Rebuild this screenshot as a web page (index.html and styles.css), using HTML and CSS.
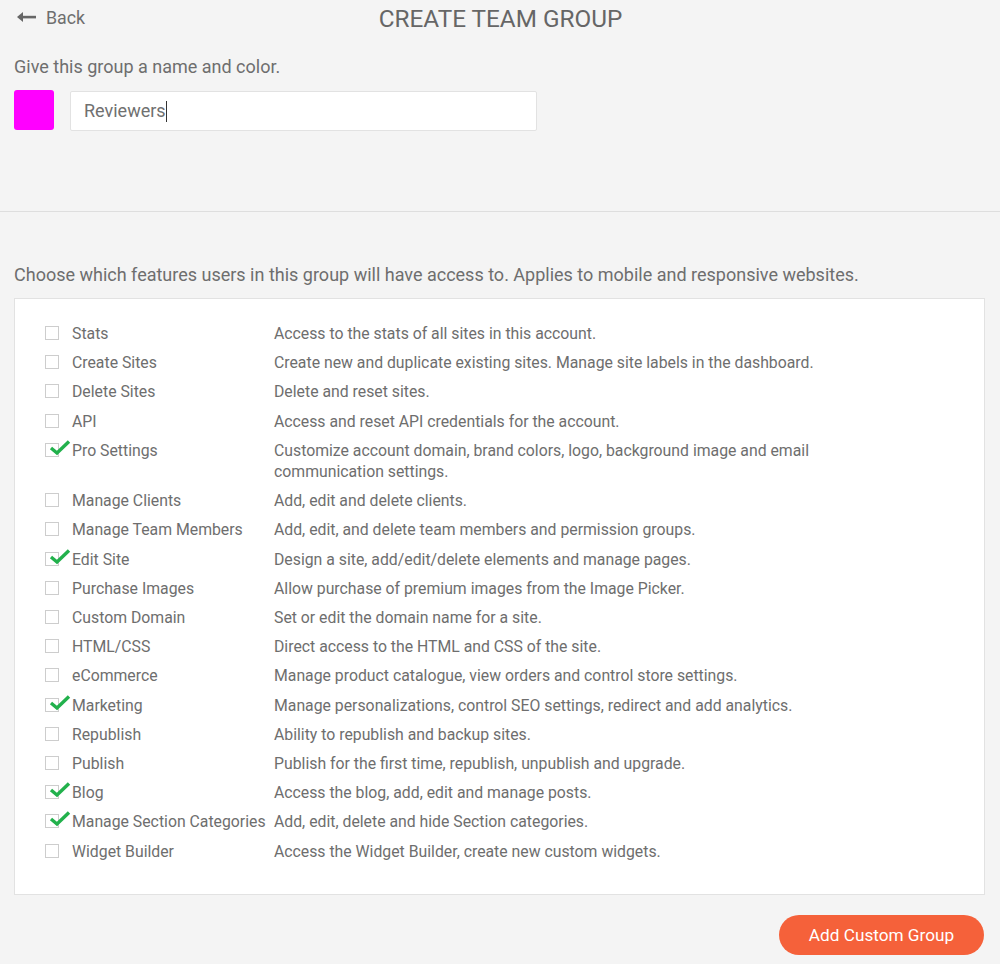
FILE: index.html
```html
<!DOCTYPE html>
<html lang="en">
  <head>
    <meta charset="UTF-8" />
    <title>Create Team Group</title>
    <meta name="viewport" content="width=device-width, initial-scale=1.0" />
    <link rel="stylesheet" href="styles.css">
  </head>
  <body>
    <header class="top">
      <a class="back" href="#">
        <svg width="20" height="12" viewBox="0 0 20 12">
          <path d="M7 1 L1 6 L7 11 Z" fill="#666" />
          <rect x="5" y="4.8" width="15" height="2.6" fill="#666" />
        </svg>
        Back
      </a>
      <h1>CREATE TEAM GROUP</h1>
      <span></span>
    </header>

    <section class="name-section">
      <p class="lead">Give this group a name and color.</p>
      <div class="name-row">
        <div class="swatch"></div>
        <div class="name-field">Reviewers<span class="caret"></span></div>
      </div>
    </section>

    <hr class="divider" />

    <section class="features">
      <p class="lead">Choose which features users in this group will have access to. Applies to mobile and responsive websites.</p>
      <div class="feature-box">
        <div class="feature-list" id="featureList"></div>
      </div>
      <div class="actions">
        <button type="button">Add Custom Group</button>
      </div>
    </section>

    <script>
      const features = [
        ["Stats", "Access to the stats of all sites in this account.", false],
        ["Create Sites", "Create new and duplicate existing sites. Manage site labels in the dashboard.", false],
        ["Delete Sites", "Delete and reset sites.", false],
        ["API", "Access and reset API credentials for the account.", false],
        ["Pro Settings", "Customize account domain, brand colors, logo, background image and email communication settings.", true],
        ["Manage Clients", "Add, edit and delete clients.", false],
        ["Manage Team Members", "Add, edit, and delete team members and permission groups.", false],
        ["Edit Site", "Design a site, add/edit/delete elements and manage pages.", true],
        ["Purchase Images", "Allow purchase of premium images from the Image Picker.", false],
        ["Custom Domain", "Set or edit the domain name for a site.", false],
        ["HTML/CSS", "Direct access to the HTML and CSS of the site.", false],
        ["eCommerce", "Manage product catalogue, view orders and control store settings.", false],
        ["Marketing", "Manage personalizations, control SEO settings, redirect and add analytics.", true],
        ["Republish", "Ability to republish and backup sites.", false],
        ["Publish", "Publish for the first time, republish, unpublish and upgrade.", false],
        ["Blog", "Access the blog, add, edit and manage posts.", true],
        ["Manage Section Categories", "Add, edit, delete and hide Section categories.", true],
        ["Widget Builder", "Access the Widget Builder, create new custom widgets.", false],
      ];

      const list = document.getElementById("featureList");
      const tick =
        '<svg class="tick" width="24" height="16" viewBox="0 0 24 16">' +
        '<path d="M4 8 L10 13 L22 1.5" fill="none" stroke="#22b14c" stroke-width="3.4" />' +
        "</svg>";

      features.forEach(function (f) {
        const row = document.createElement("div");
        row.className = "feature-row";
        row.innerHTML =
          '<span class="box">' + (f[2] ? tick : "") + "</span>" +
          '<span class="name">' + f[0] + "</span>" +
          '<span class="desc">' + f[1] + "</span>";
        list.appendChild(row);
      });
    </script>
  </body>
</html>
```

FILE: styles.css
```css
body {
  margin: 0;
  background: #f4f4f4;
  color: #6e6e6e;
  font-family: Roboto, "Liberation Sans", sans-serif;
}

.top {
  display: grid;
  grid-template-columns: 1fr auto 1fr;
  align-items: center;
  height: 38px;
  padding: 0 15px 0 16px;
}

.back {
  display: flex;
  align-items: center;
  gap: 10px;
  color: #6e6e6e;
  font-size: 17.8px;
  text-decoration: none;
  margin-bottom: 4px;
}

.top h1 {
  margin: 0;
  font-size: 24.3px;
  font-weight: 400;
  color: #666;
  line-height: 30px;
}

.name-section,
.features {
  padding: 0 15px 0 14px;
}

.lead {
  margin: 0;
  font-size: 18px;
  line-height: 24px;
}

.name-section .lead {
  padding-top: 17px;
}

.name-row {
  display: flex;
  gap: 16px;
  margin-top: 11px;
}

.swatch {
  width: 40px;
  height: 40px;
  border-radius: 3px;
  background: #ff00ff;
}

.name-field {
  width: 452px;
  height: 38px;
  margin-top: 1px;
  padding-left: 13px;
  background: white;
  border: 1px solid #e2e2e2;
  border-radius: 2px;
  font-size: 18px;
  line-height: 38px;
  color: #707070;
}

.caret {
  display: inline-block;
  width: 1px;
  height: 21px;
  background: #333;
  vertical-align: -5px;
}

.divider {
  margin: 80px 0 0;
  border: 0;
  border-top: 1px solid #dedede;
}

.features .lead {
  margin-top: 51px;
}

.feature-box {
  margin-top: 11px;
  background: white;
  border: 1px solid #e2e2e2;
  padding: 20px 30px 28px;
}

.feature-row {
  display: grid;
  grid-template-columns: 27px 202px 590px;
  align-items: start;
  padding: 4px 0;
  font-size: 15.8px;
  line-height: 21.2px;
}

.box {
  position: relative;
  width: 14px;
  height: 14px;
  margin-top: 3px;
  box-sizing: border-box;
  border: 1px solid #cdcdcd;
  background: white;
}

.tick {
  position: absolute;
  left: 1px;
  top: -4px;
}

.actions {
  display: flex;
  justify-content: flex-end;
  padding: 20px 1px 9px 0;
}

button {
  width: 205px;
  height: 40px;
  border: none;
  border-radius: 20px;
  background: #f5613a;
  color: white;
  font-family: Roboto, sans-serif;
  font-size: 17.2px;
  cursor: pointer;
}

button:hover {
  background: #e5532d;
}
```
